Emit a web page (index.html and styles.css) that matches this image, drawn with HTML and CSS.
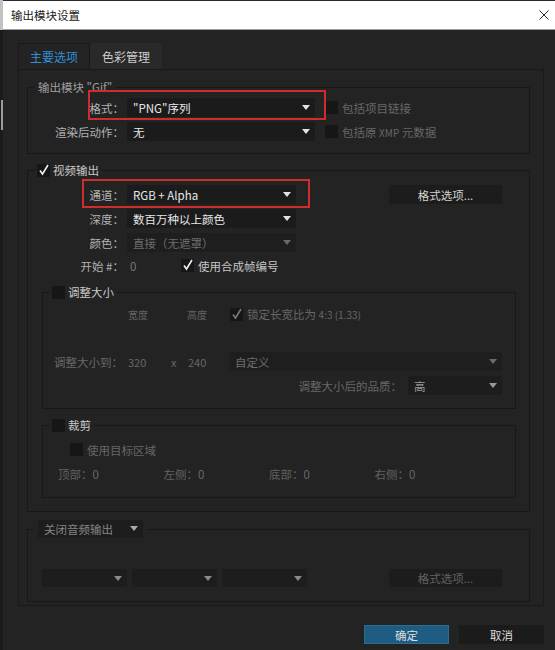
FILE: index.html
```html
<!DOCTYPE html>
<html lang="zh-CN">
<head>
    <meta charset="UTF-8">
    <meta name="viewport" content="width=device-width, initial-scale=1.0">
    <title>输出模块设置</title>
    <link rel="stylesheet" href="styles.css">
</head>
<body>

<div class="screen">
    <!-- sliver of the window behind the dialog -->
    <div class="edge">
        <div class="edge-top"></div>
        <div class="edge-thumb"></div>
    </div>

    <div class="dialog">
        <div class="titlebar">
            <span>输出模块设置</span>
            <svg class="close" width="10" height="10" viewBox="0 0 10 10">
                <path d="M0.5 0.5 L9.5 9.5 M9.5 0.5 L0.5 9.5" stroke="#262626" stroke-width="1" fill="none"/>
            </svg>
        </div>

        <div class="content">
            <div class="tabs">
                <div class="tab active">主要选项</div>
                <div class="tab">色彩管理</div>
            </div>

            <div class="panel">
                <!-- output module -->
                <fieldset class="group g-output">
                    <legend class="legend-text">输出模块 "Gif"</legend>

                    <div class="row first">
                        <span class="label">格式：</span>
                        <div class="select w-format">"PNG"序列</div>
                        <span class="check off"></span>
                        <span class="check-text dim">包括项目链接</span>
                        <div class="mark mark-format"></div>
                    </div>
                    <div class="row">
                        <span class="label">渲染后动作：</span>
                        <div class="select w-format">无</div>
                        <span class="check off"></span>
                        <span class="check-text dim">包括原 <span class="small">XMP</span> 元数据</span>
                    </div>
                </fieldset>

                <!-- video output -->
                <fieldset class="group g-video">
                    <legend class="legend-check">
                        <span class="check on"><svg viewBox="0 0 13 13"><path d="M3 6.5 L5.5 10 L11 1"/></svg></span>
                        <span class="legend-label">视频输出</span>
                    </legend>

                    <div class="row first-video">
                        <span class="label">通道：</span>
                        <div class="select w-video">RGB + Alpha</div>
                        <div class="btn-format">格式选项...</div>
                        <div class="mark mark-channel"></div>
                    </div>
                    <div class="row">
                        <span class="label">深度：</span>
                        <div class="select w-video">数百万种以上颜色</div>
                    </div>
                    <div class="row">
                        <span class="label">颜色：</span>
                        <div class="select w-video disabled">直接（无遮罩）</div>
                    </div>
                    <div class="row start-row">
                        <span class="label">开始 #：</span>
                        <span class="start-value">0</span>
                        <span class="check on"><svg viewBox="0 0 13 13"><path d="M3 6.5 L5.5 10 L11 1"/></svg></span>
                        <span class="check-text">使用合成帧编号</span>
                    </div>

                    <fieldset class="group sub g-resize">
                        <legend class="legend-check">
                            <span class="check off"></span>
                            <span class="legend-label">调整大小</span>
                        </legend>

                        <div class="size-head">
                            <span class="col-w">宽度</span>
                            <span class="col-h">高度</span>
                            <span class="check on dim-check"><svg viewBox="0 0 13 13"><path d="M3 6.5 L5.5 10 L11 1"/></svg></span>
                            <span class="check-text dim">锁定长宽比为 <span class="small">4:3 (1.33)</span></span>
                        </div>
                        <div class="row size-row">
                            <span class="label sub-label dim">调整大小到：</span>
                            <span class="num n-w">320</span>
                            <span class="num n-x">x</span>
                            <span class="num n-h">240</span>
                            <div class="select grow disabled">自定义</div>
                        </div>
                        <div class="row quality-row">
                            <span class="dim">调整大小后的品质：</span>
                            <div class="select w-quality semi">高</div>
                        </div>
                    </fieldset>

                    <fieldset class="group sub g-crop">
                        <legend class="legend-check">
                            <span class="check off"></span>
                            <span class="legend-label">裁剪</span>
                        </legend>

                        <div class="crop-check">
                            <span class="check off"></span>
                            <span class="check-text dim">使用目标区域</span>
                        </div>
                        <div class="crop-values">
                            <span>顶部：<span class="zero">0</span></span>
                            <span>左侧：<span class="zero">0</span></span>
                            <span>底部：<span class="zero">0</span></span>
                            <span>右侧：<span class="zero">0</span></span>
                        </div>
                    </fieldset>
                </fieldset>

                <!-- audio output -->
                <fieldset class="group g-audio">
                    <legend class="legend-select">
                        <div class="select audio-mode">关闭音频输出</div>
                    </legend>

                    <div class="audio-row">
                        <div class="select w-audio empty"></div>
                        <div class="select w-audio empty"></div>
                        <div class="select w-audio empty"></div>
                        <div class="btn-format dim">格式选项...</div>
                    </div>
                </fieldset>
            </div>

            <div class="footer">
                <button class="btn-ok">确定</button>
                <button class="btn-cancel">取消</button>
            </div>
        </div>
    </div>
</div>

</body>
</html>
```

FILE: styles.css
```css
* {
    margin: 0;
    padding: 0;
    box-sizing: border-box;
}

body {
    width: 555px;
    height: 650px;
    overflow: hidden;
    background-color: #232323;
    font-family: "Noto Sans CJK SC", "Noto Sans", sans-serif;
    font-size: 11.5px;
    color: #b2b2b2;
}

.screen {
    display: flex;
    height: 650px;
}

.edge {
    width: 3px;
    flex: none;
    background-color: #1b1b1b;
}

.edge-top {
    height: 30px;
    background-color: #c2c2c2;
}

.edge-thumb {
    height: 30px;
    width: 2px;
    margin: 70px 0 0 1px;
    background-color: #9c9c9c;
}

.dialog {
    flex: 1;
    background-color: #232323;
}

.titlebar {
    height: 30px;
    background-color: #fff;
    border-top: 1px solid #2b2b2b;
    border-bottom: 1px solid #a0a0a0;
    display: flex;
    align-items: center;
    justify-content: space-between;
    padding: 0 6px 0 8px;
    color: #1a1a1a;
}

.content {
    padding: 13px 11px 0 15px;
}

/* tabs */
.tabs {
    display: flex;
    height: 26px;
}

.tab {
    width: 72px;
    display: flex;
    align-items: center;
    justify-content: center;
    background-color: #292929;
    color: #cdcdcd;
    font-size: 12px;
}

.tab.active {
    background-color: #232323;
    border: 1px solid #191919;
    border-bottom: none;
    color: #2f8fd6;
}

.panel {
    border: 1px solid #191919;
    padding: 9px 13px 3px 8px;
}

/* group boxes */
.group {
    border: 1px solid #181818;
    min-width: 0;
}

.group legend {
    height: 16px;
    line-height: 16px;
}

.legend-text {
    margin-left: 6px;
    padding: 0 4px;
    color: #9e9e9e;
}

.legend-check {
    margin-left: 7px;
    padding: 0 3px 0 2px;
    display: flex;
    align-items: center;
    gap: 3px;
}

.legend-label {
    color: #c9c9c9;
}

.legend-select {
    margin-left: 6px;
    padding: 0 4px;
}

.g-output {
    padding-bottom: 12px;
}

.g-video {
    margin-top: 8px;
    padding-bottom: 13px;
}

.g-audio {
    margin-top: 8px;
    padding-bottom: 14px;
}

.group legend.legend-select {
    height: 18px;
    line-height: 18px;
}

.sub {
    margin-left: 14px;
    margin-right: 13px;
}

.g-resize {
    margin-top: 10px;
    padding-bottom: 13px;
}

.g-crop {
    margin-top: 8px;
    padding-bottom: 15px;
}

/* rows */
.row {
    display: flex;
    align-items: center;
    height: 19px;
    margin-top: 5px;
    position: relative;
}

.row.first {
    margin-top: 3px;
}

.row.first-video {
    margin-top: 7px;
}

.label {
    width: 96px;
    flex: none;
    text-align: right;
    margin-right: 3px;
    white-space: nowrap;
}

.select {
    height: 19px;
    flex: none;
    background-color: #1b1b1b;
    color: #e8e8e8;
    display: flex;
    align-items: center;
    padding: 0 18px 0 6px;
    position: relative;
    white-space: nowrap;
}

.select::after {
    content: "";
    position: absolute;
    right: 5px;
    top: 7px;
    border-left: 4px solid transparent;
    border-right: 4px solid transparent;
    border-top: 5px solid #e4e4e4;
}

.select.disabled {
    background-color: #1e1e1e;
    color: #6c6c6c;
}

.select.disabled::after {
    border-top-color: #6a6a6a;
}

.select.semi {
    background-color: #1d1d1d;
    color: #9a9a9a;
}

.select.semi::after {
    border-top-color: #9a9a9a;
}

.w-format {
    width: 188px;
}

.w-video {
    width: 169px;
}

.w-quality {
    width: 94px;
    margin-left: 6px;
}

.grow {
    flex: 1;
    margin-right: 13px;
}

.select.empty {
    background-color: #1d1d1d;
}

.select.empty::after {
    border-top-color: #8a8a8a;
}

.w-audio {
    width: 85px;
}

.audio-mode {
    width: 105px;
    height: 18px;
    background-color: #1d1d1d;
    color: #858585;
}

.audio-mode::after {
    top: 6px;
    border-top-color: #a8a8a8;
}

/* checkboxes */
.check {
    width: 13px;
    height: 13px;
    flex: none;
    background-color: #161616;
    display: inline-block;
}

.row .check.off {
    margin-left: 10px;
}

.check svg {
    display: block;
    width: 13px;
    height: 13px;
}

.check svg path {
    fill: none;
    stroke: #f0f0f0;
    stroke-width: 1.6;
}

.dim-check svg path {
    stroke: #7a7a7a;
}

.check-text {
    margin-left: 4px;
    white-space: nowrap;
    color: #c6c6c6;
}

.dim {
    color: #676767;
}

.check-text.dim {
    color: #676767;
}

.small {
    font-size: 10px;
}

.btn-format {
    width: 113px;
    height: 19px;
    margin-left: 93px;
    background-color: #1c1c1c;
    color: #d2d2d2;
    display: flex;
    align-items: center;
    justify-content: center;
}

.btn-format.dim {
    color: #626262;
    margin-left: auto;
    margin-right: 27px;
    height: 18px;
}

.start-row {
    height: 17px;
}

.start-value {
    width: 51px;
    flex: none;
    margin-left: 3px;
    color: #717a86;
}

/* resize */
.size-head {
    display: flex;
    align-items: center;
    height: 14px;
    margin-top: 7px;
    padding-left: 85px;
    color: #656565;
}

.col-w {
    width: 59px;
    font-size: 10px;
}

.col-h {
    width: 43px;
    font-size: 10px;
}

.size-row {
    margin-top: 31px;
}

.sub-label {
    width: 80px;
    margin-right: 5px;
}

.num {
    flex: none;
    color: #686868;
    font-size: 11px;
}

.n-w {
    width: 43px;
}

.n-x {
    width: 17px;
}

.n-h {
    width: 41px;
}

.quality-row {
    justify-content: flex-end;
    padding-right: 13px;
}

/* crop */
.crop-check {
    display: flex;
    align-items: center;
    height: 13px;
    margin-top: 10px;
    padding-left: 27px;
}

.crop-values {
    display: grid;
    grid-template-columns: repeat(4, 105.5px);
    height: 16px;
    line-height: 16px;
    margin-top: 10px;
    padding-left: 15px;
    color: #626262;
}

.zero {
    color: #5f6a76;
}

/* audio */
.audio-row {
    display: flex;
    gap: 5px;
    height: 18px;
    margin-top: 31px;
    padding-left: 14px;
}

.audio-row .select {
    height: 18px;
}

.audio-row .select::after {
    top: 7px;
}

/* red annotation frames */
.mark {
    position: absolute;
    border: 2px solid #cf2c2c;
}

.mark-format {
    left: 60px;
    top: -8px;
    width: 238px;
    height: 30px;
}

.mark-channel {
    left: 54px;
    top: -6px;
    width: 228px;
    height: 29px;
}

/* footer */
.footer {
    display: flex;
    justify-content: flex-end;
    gap: 10px;
    margin-top: 19px;
}

.footer button {
    width: 85px;
    height: 19px;
    border: none;
    font-family: inherit;
    font-size: 11.5px;
    color: #dedede;
}

.btn-ok {
    background-color: #1e5c82;
    border: 1px solid #2a6c96 !important;
}

.btn-cancel {
    background-color: #1b1b1b;
}
```
